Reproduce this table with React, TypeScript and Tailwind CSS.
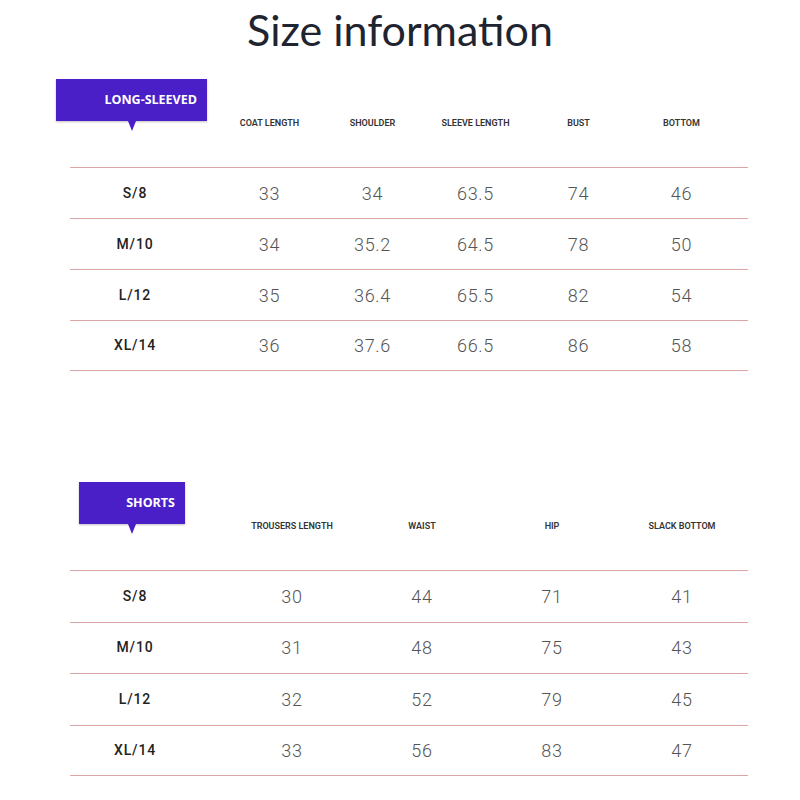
import React from 'react';

interface Section {
  label: string;
  badgeLeft: string;
  badgeWidth: string;
  colsOffset: string;
  colWidth: string;
  rowHeight: string;
  headers: string[];
  rows: { size: string; values: string[] }[];
}

const longSleeved: Section = {
  label: 'LONG-SLEEVED',
  badgeLeft: 'ml-[56px]',
  badgeWidth: 'w-[151px]',
  colsOffset: 'ml-[18px]',
  colWidth: 'w-[103px]',
  rowHeight: 'h-[51px]',
  headers: ['COAT LENGTH', 'SHOULDER', 'SLEEVE LENGTH', 'BUST', 'BOTTOM'],
  rows: [
    { size: 'S/8', values: ['33', '34', '63.5', '74', '46'] },
    { size: 'M/10', values: ['34', '35.2', '64.5', '78', '50'] },
    { size: 'L/12', values: ['35', '36.4', '65.5', '82', '54'] },
    { size: 'XL/14', values: ['36', '37.6', '66.5', '86', '58'] },
  ],
};

const shorts: Section = {
  label: 'SHORTS',
  badgeLeft: 'ml-[79px]',
  badgeWidth: 'w-[106px]',
  colsOffset: 'ml-[27px]',
  colWidth: 'w-[130px]',
  rowHeight: 'h-[51.5px]',
  headers: ['TROUSERS LENGTH', 'WAIST', 'HIP', 'SLACK BOTTOM'],
  rows: [
    { size: 'S/8', values: ['30', '44', '71', '41'] },
    { size: 'M/10', values: ['31', '48', '75', '43'] },
    { size: 'L/12', values: ['32', '52', '79', '45'] },
    { size: 'XL/14', values: ['33', '56', '83', '47'] },
  ],
};

const Badge: React.FC<{ label: string; className: string }> = ({ label, className }) => (
  <div
    className={`relative flex h-[42px] items-center justify-end pr-[10px] bg-[#4a1fc8] shadow-[0_1px_2px_rgba(0,0,0,0.25)] ${className}`}
  >
    <span className="font-['Open_Sans',sans-serif] text-[12.5px] font-bold text-white">{label}</span>
    <div className="absolute left-1/2 top-full -translate-x-1/2 h-0 w-0 border-x-[4px] border-t-[10px] border-x-transparent border-t-[#4a1fc8]" />
  </div>
);

const SizeTable: React.FC<{ section: Section; className?: string }> = ({ section, className }) => (
  <div className={className}>
    <div className="flex h-[88px]">
      <div className="flex w-[218px] items-start">
        <Badge label={section.label} className={`${section.badgeLeft} ${section.badgeWidth}`} />
      </div>
    </div>
    <div className="ml-[70px] w-[678px]">
      <div className="relative -mt-[88px] flex h-[88px] items-center">
        <div className="w-[130px]" />
        <div className={`flex ${section.colsOffset}`}>
          {section.headers.map((h) => (
            <div
              key={h}
              className={`${section.colWidth} pt-[2px] text-center font-['Roboto',sans-serif] text-[9px] font-semibold text-[#333]`}
            >
              {h}
            </div>
          ))}
        </div>
      </div>
      {section.rows.map((row, i) => (
        <div
          key={row.size}
          className={`flex ${section.rowHeight} items-center border-t border-[#dba5a5] ${
            i === section.rows.length - 1 ? 'border-b' : ''
          }`}
        >
          <div className="w-[130px] text-center font-['Roboto',sans-serif] text-[14px] font-medium tracking-[0.06em] text-[#222]">
            {row.size}
          </div>
          <div className={`flex ${section.colsOffset}`}>
            {row.values.map((v, j) => (
              <div
                key={j}
                className={`${section.colWidth} text-center font-['Roboto',sans-serif] text-[18px] font-light tracking-[0.04em] text-[#555]`}
              >
                {v}
              </div>
            ))}
          </div>
        </div>
      ))}
    </div>
  </div>
);

export default function App() {
  return (
    <div className="h-[800px] w-[800px] overflow-hidden bg-white">
      <h1 className="pt-[6px] text-center font-['Lato',sans-serif] text-[43px] leading-[48px] text-[#1f2530]">
        Size information
      </h1>
      <SizeTable section={longSleeved} className="mt-[25px]" />
      <SizeTable section={shorts} className="mt-[111px]" />
    </div>
  );
}
